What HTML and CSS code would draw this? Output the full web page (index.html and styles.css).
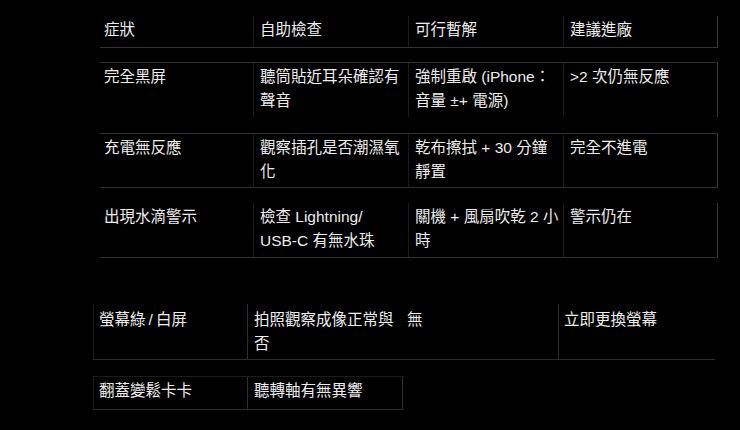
FILE: index.html
```html
<!DOCTYPE html>
<html lang="zh-Hant">
<head>
<meta charset="utf-8">
<link rel="stylesheet" href="styles.css">
</head>
<body>
<div class="page">
  <div class="table-top">
    <div class="row head">
      <div class="cell first">症狀</div>
      <div class="cell">自助檢查</div>
      <div class="cell">可行暫解</div>
      <div class="cell last">建議進廠</div>
    </div>
    <div class="row r1">
      <div class="cell first">完全黑屏</div>
      <div class="cell">聽筒貼近耳朵確認有聲音</div>
      <div class="cell">強制重啟 (iPhone：音量 ±+ 電源)</div>
      <div class="cell last">&gt;2 次仍無反應</div>
    </div>
    <div class="row r2">
      <div class="cell first">充電無反應</div>
      <div class="cell">觀察插孔是否潮濕氧化</div>
      <div class="cell">乾布擦拭 + 30 分鐘靜置</div>
      <div class="cell last">完全不進電</div>
    </div>
    <div class="row r3">
      <div class="cell first">出現水滴警示</div>
      <div class="cell">檢查 Lightning/<wbr><span class="nw">USB-C</span> 有無水珠</div>
      <div class="cell">關機 + 風扇吹乾 2 小時</div>
      <div class="cell last">警示仍在</div>
    </div>
  </div>
  <div class="table-bottom">
    <div class="brow b1">
      <div class="bcell c1">螢幕綠&#8201;/&#8201;白屏</div>
      <div class="bcell c2">拍照觀察成像正常與否</div>
      <div class="bcell c3">無</div>
      <div class="bcell c4">立即更換螢幕</div>
    </div>
    <div class="brow b2">
      <div class="bcell c1">翻蓋變鬆卡卡</div>
      <div class="bcell c2 end">聽轉軸有無異響</div>
    </div>
  </div>
</div>
</body>
</html>
```

FILE: styles.css
```css
html, body {
  margin: 0;
  padding: 0;
  background: #000;
}

body {
  width: 740px;
  height: 430px;
  overflow: hidden;
  color: #ededed;
  font-family: "Liberation Sans", "Noto Sans CJK TC", sans-serif;
  font-size: 15.5px;
  line-height: 24px;
}

.nw {
  white-space: nowrap;
}

.page {
  padding-top: 16px;
}

.table-top {
  margin-left: 100px;
  width: 618px;
  display: flex;
  flex-direction: column;
}

.row {
  display: grid;
  grid-template-columns: 153px 155px 155px 155px;
}

.cell {
  padding: 2px 4px 0 6px;
  border-left: 1px solid #1a1a1a;
}

.cell.first {
  padding-left: 4px;
  border-left: none;
}

.cell.last {
  border-right: 1px solid #3a3a3a;
}

.head {
  height: 31px;
  border-bottom: 1px solid #333;
}

.r1 {
  margin-top: 14px;
  border-top: 1px solid #303030;
  height: 54px;
}

.r2 {
  margin-top: 16px;
  border-top: 1px solid #303030;
  border-bottom: 1px solid #303030;
  height: 53px;
}

.r3 {
  margin-top: 15px;
  border-bottom: 1px solid #303030;
  height: 54px;
}

.table-bottom {
  margin-top: 46px;
  margin-left: 93px;
  display: flex;
  flex-direction: column;
}

.brow {
  display: flex;
}

.bcell {
  box-sizing: border-box;
  padding: 4px 4px 0 5px;
}

.c1 {
  width: 154px;
  border-left: 1px solid #1a1a1a;
}

.c2 {
  width: 156px;
  border-left: 1px solid #2e2e2e;
  padding-left: 6px;
}

.c3 {
  width: 155px;
  padding-left: 4px;
}

.c4 {
  width: 157px;
  border-left: 1px solid #2e2e2e;
  padding-left: 5px;
}

.b1 {
  height: 55px;
  border-bottom: 1px solid #2c2c2c;
  width: 622px;
}

.b2 {
  margin-top: 16px;
  height: 32px;
  width: 311px;
  border-top: 1px solid #1c1c1c;
  border-bottom: 1px solid #2a2a2a;
}

.b2 .bcell {
  padding-top: 2px;
}

.c2.end {
  border-right: 1px solid #2e2e2e;
}
```
